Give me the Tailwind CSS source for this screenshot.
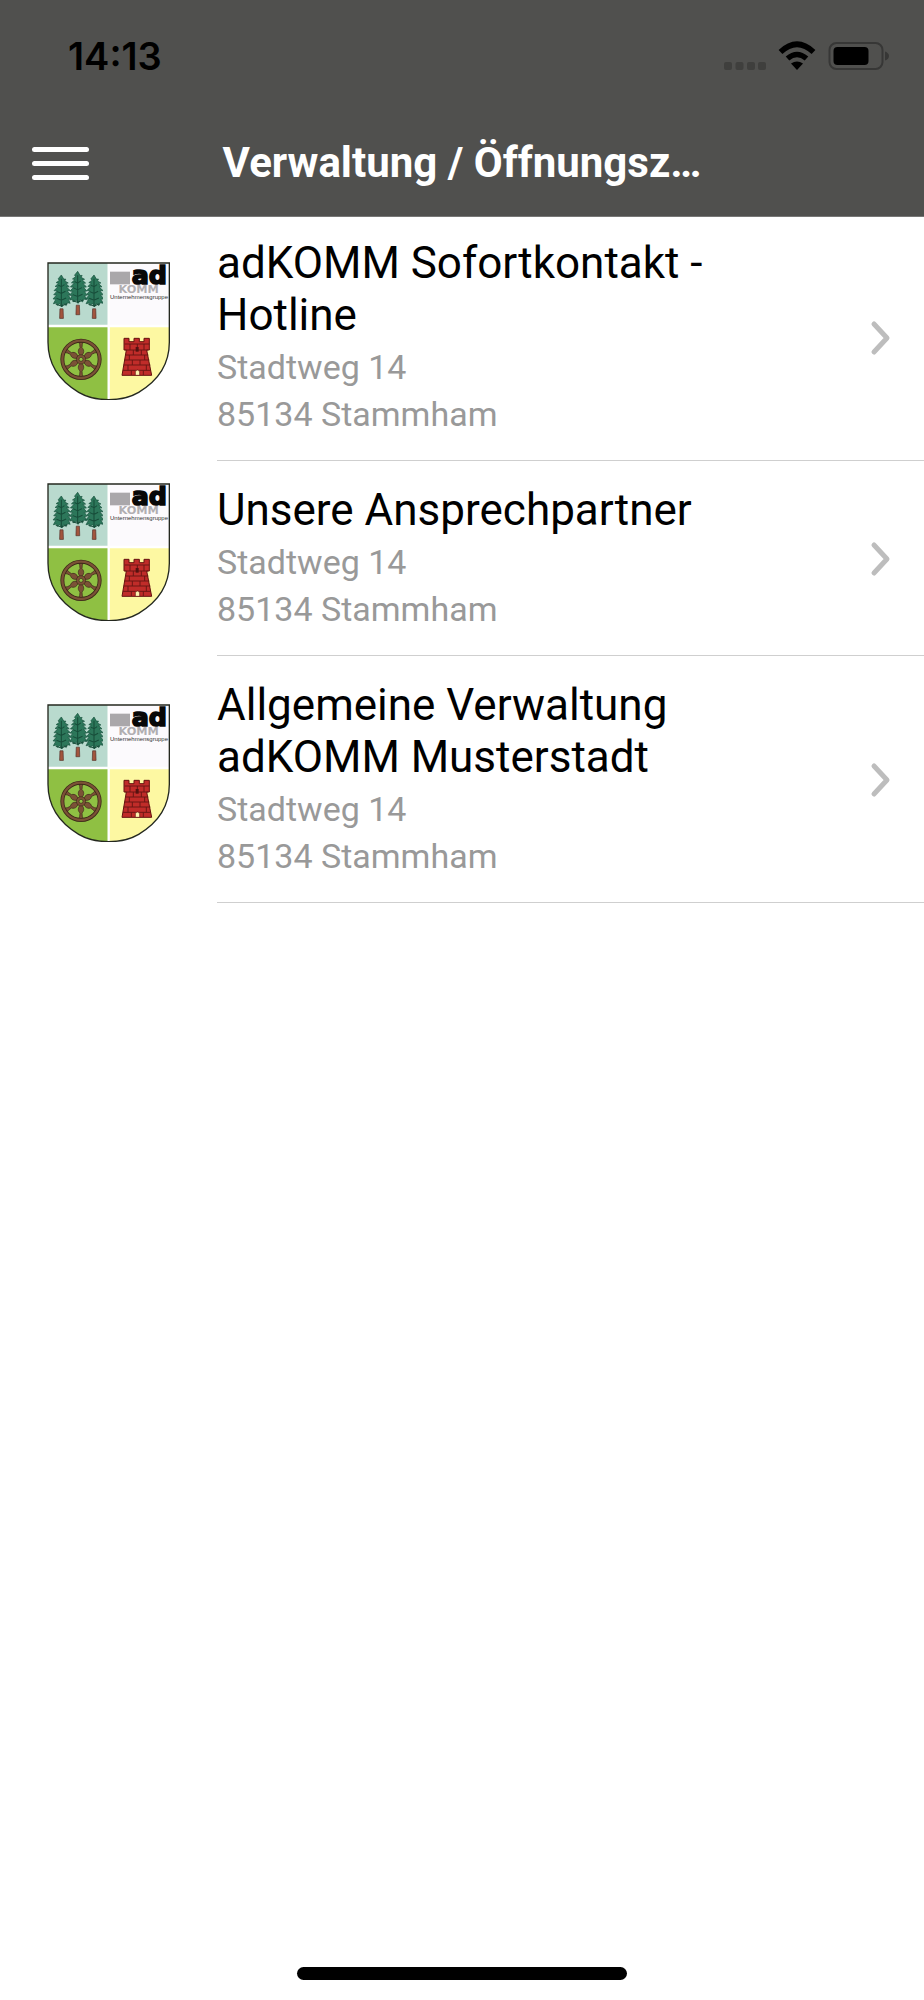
<!DOCTYPE html>
<html lang="de">
<head>
<meta charset="utf-8">
<meta name="viewport" content="width=device-width, initial-scale=1">
<title>Verwaltung / Öffnungszeiten</title>
<script src="https://cdn.jsdelivr.net/npm/@tailwindcss/browser@4"></script>
</head>
<body class="flex min-h-screen flex-col bg-white font-['Roboto',sans-serif] text-black">

<!-- Shared drawings -->
<svg class="hidden" aria-hidden="true">
  <symbol id="tree" viewBox="0 0 52 142" preserveAspectRatio="none">
    <path d="M22 108h9l1 30H21z" fill="#a2553d" stroke="#54302a" stroke-width="2"/>
    <path d="M26 2l7 13 6 0-3 6 10 6-7 2 10 10-8 1 11 11-9 1 10 12-8 1 10 12-9 1 7 13-9-2-4 9-7-7-5 11-6-10-8 5-2-7-9 2 7-14-8-1 10-12-8-1 10-12-9-1 11-12-8-1 10-10-7-2 9-7-3-5z" fill="#2c775a" stroke="#17503c" stroke-width="2" stroke-linejoin="round"/>
    <path d="M26 14v88M17 34l9 5 9-7M14 54l12 6 12-7M12 75l14 6 14-7M10 94l16 5 16-7" fill="none" stroke="#174c39" stroke-width="3"/>
  </symbol>
  <symbol id="spoke" viewBox="0 0 30 60" overflow="visible">
    <path d="M13 50l-5-8c-3-8 0-13 4-17l-1-10-3-9h14l-3 9-1 10c4 4 7 9 4 17l-5 8z" fill="#7b5136" stroke="#3d2a19" stroke-width="2"/>
  </symbol>
  <symbol id="crest" viewBox="21 21 369 414">
    <path d="M24 24h182v190H24z" fill="#b9dace"/>
    <path d="M206 24h182v190H206z" fill="#fcfafd"/>
    <path d="M24 214H206V434Q154 434 116 412C62 380 24 330 24 262z" fill="#8fc043"/>
    <path d="M388 214H206V434Q258 434 296 412C350 380 388 330 388 262z" fill="#fdf8a2"/>
    <path d="M206 24v408M24 213h364" stroke="#fff" stroke-width="7"/>
    <use href="#tree" x="37" y="58" width="54" height="136"/>
    <use href="#tree" x="86" y="47" width="54" height="136"/>
    <use href="#tree" x="135" y="58" width="54" height="136"/>
    <path d="M210 50h60v38h-60z" fill="#aaa7aa"/>
    <text x="381" y="86" text-anchor="end" font-family="DejaVu Sans" font-weight="700" font-size="76" stroke="#080808" stroke-width="5" fill="#080808">ad</text>
    <text x="296" y="113" text-anchor="middle" font-family="DejaVu Sans" font-weight="700" font-size="34" fill="#b1aeb1">KOMM</text>
    <text x="210" y="131" font-family="Liberation Sans" font-size="18" fill="#333">Unternehmensgruppe</text>
    <g transform="translate(123 313)">
      <use href="#spoke" x="-15" y="-60" width="30" height="60"/>
      <use href="#spoke" x="-15" y="-60" width="30" height="60" transform="rotate(60)"/>
      <use href="#spoke" x="-15" y="-60" width="30" height="60" transform="rotate(120)"/>
      <use href="#spoke" x="-15" y="-60" width="30" height="60" transform="rotate(180)"/>
      <use href="#spoke" x="-15" y="-60" width="30" height="60" transform="rotate(240)"/>
      <use href="#spoke" x="-15" y="-60" width="30" height="60" transform="rotate(300)"/>
      <circle r="56" fill="none" stroke="#3d2a19" stroke-width="12"/>
      <circle r="56" fill="none" stroke="#7b5136" stroke-width="7"/>
      <circle r="14" fill="#7b5136" stroke="#3d2a19" stroke-width="2"/>
      <circle r="6" fill="#8fc043" stroke="#3d2a19" stroke-width="2"/>
    </g>
    <path d="M252 250h15v10h15v-10h16v10h14v-10h16v35h-8l15 76H246l13-76h-7z" fill="#c02c29" stroke="#65120f" stroke-width="3"/>
    <path d="M254 267h74M256 285h68M257 300h68M254 315h74M251 330h80M249 346h84M270 267v18M292 267v18M312 267v18M280 285v15M304 285v15M268 300v15M314 300v15M277 315v15M300 315v15M264 330v16M319 330v16M274 346v14M310 346v14" stroke="#6d1714" stroke-width="3"/>
    <path d="M287 276h9v14h-9z" fill="#551210"/>
    <path d="M286 361v-12q6-8 13 0v12z" fill="#fdf3b0" stroke="#65120f" stroke-width="2"/>
    <path d="M24 24H388V262C388 330 350 380 296 412Q258 434 206 434Q154 434 116 412C62 380 24 330 24 262Z" fill="none" stroke="#24281f" stroke-width="4"/>
  </symbol>
  <symbol id="chevron" viewBox="0 0 22 36">
    <path d="M4 4l13 14L4 32" fill="none" stroke="#bdbdbd" stroke-width="5" stroke-linecap="round" stroke-linejoin="round"/>
  </symbol>
</svg>

<header class="border-b border-[#777776] bg-[#50504e]">
  <div class="flex h-28 items-center justify-between pr-[35px] pl-[68px]">
    <time class="font-['Inter',sans-serif] text-[38px] leading-none font-semibold">14:13</time>
    <svg class="h-[30px] w-[166px]" viewBox="0 0 166 30" role="img" aria-label="WLAN verbunden, Akku 75 Prozent">
      <g fill="#3f3f3d">
        <rect x="1" y="21" width="8" height="8" rx="2"/>
        <rect x="12.500" y="21" width="8" height="8" rx="2"/>
        <rect x="24" y="21" width="8" height="8" rx="2"/>
        <rect x="35" y="21" width="8" height="8" rx="2"/>
      </g>
      <path d="M57.500 11Q74 -4.500 90.500 11M64.500 17.500Q74 9.500 83.500 17.500" fill="none" stroke="#000" stroke-width="5.500"/>
      <path d="M68 22.500Q74 18.500 80 22.500L74 29z"/>
      <rect x="106.500" y="2" width="53" height="26" rx="7" fill="none" stroke="#373736" stroke-width="2"/>
      <rect x="110.500" y="6" width="35" height="18" rx="4"/>
      <path d="M162 10.500q4 1.500 4 4.500t-4 4.500z" fill="#373736"/>
    </svg>
  </div>
  <div class="grid h-[104px] grid-cols-[1fr_auto_1fr] items-start px-8">
    <button type="button" aria-label="Menü" class="mt-[35px] flex w-[57px] flex-col gap-[9px]">
      <span class="h-[5px] w-full rounded-full bg-white"></span>
      <span class="h-[5px] w-full rounded-full bg-white"></span>
      <span class="h-[5px] w-full rounded-full bg-white"></span>
    </button>
    <h1 class="mt-[25px] text-[42px] leading-[52px] font-bold whitespace-nowrap text-white">Verwaltung / Öffnungsz…</h1>
  </div>
</header>

<main class="grow">
  <ul class="-mt-[3px]">
    <li>
      <a href="#hotline" class="flex">
        <span class="flex w-[217px] items-center pb-[13px] pl-[47px]"><svg class="h-[138px] w-[123px]" aria-hidden="true"><use href="#crest"/></svg></span>
        <span class="flex flex-1 items-center border-b border-[#cfcfcf] pt-[23px] pr-8 pb-[22px]">
          <span class="flex-1 pr-8">
            <span class="block text-[44px] leading-[52px]">adKOMM Sofortkontakt - Hotline</span>
            <span class="mt-[3px] block text-[34px] leading-[47px] text-[#999]">Stadtweg 14<br>85134 Stammham</span>
          </span>
          <svg class="h-9 w-[22px]" aria-hidden="true"><use href="#chevron"/></svg>
        </span>
      </a>
    </li>
    <li>
      <a href="#ansprechpartner" class="flex">
        <span class="flex w-[217px] items-center pb-[13px] pl-[47px]"><svg class="h-[138px] w-[123px]" aria-hidden="true"><use href="#crest"/></svg></span>
        <span class="flex flex-1 items-center border-b border-[#cfcfcf] pt-[23px] pr-8 pb-[22px]">
          <span class="flex-1 pr-8">
            <span class="block text-[44px] leading-[52px]">Unsere Ansprechpartner</span>
            <span class="mt-[3px] block text-[34px] leading-[47px] text-[#999]">Stadtweg 14<br>85134 Stammham</span>
          </span>
          <svg class="h-9 w-[22px]" aria-hidden="true"><use href="#chevron"/></svg>
        </span>
      </a>
    </li>
    <li>
      <a href="#verwaltung" class="flex">
        <span class="flex w-[217px] items-center pb-[13px] pl-[47px]"><svg class="h-[138px] w-[123px]" aria-hidden="true"><use href="#crest"/></svg></span>
        <span class="flex flex-1 items-center border-b border-[#cfcfcf] pt-[23px] pr-8 pb-[22px]">
          <span class="flex-1 pr-8">
            <span class="block text-[44px] leading-[52px]">Allgemeine Verwaltung adKOMM Musterstadt</span>
            <span class="mt-[3px] block text-[34px] leading-[47px] text-[#999]">Stadtweg 14<br>85134 Stammham</span>
          </span>
          <svg class="h-9 w-[22px]" aria-hidden="true"><use href="#chevron"/></svg>
        </span>
      </a>
    </li>
  </ul>
</main>

<footer class="flex justify-center pb-5">
  <div class="h-[13px] w-[330px] rounded-full bg-black"></div>
</footer>
</body>
</html>
